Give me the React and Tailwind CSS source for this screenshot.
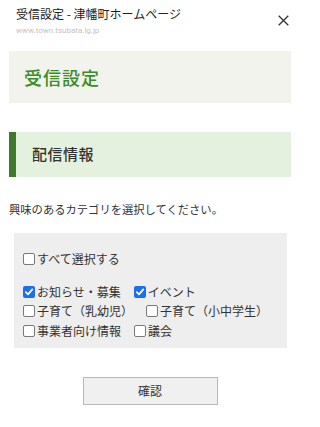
import React from 'react';

const Check = ({ checked }) =>
    checked ? (
        <span className="w-[12px] h-[12px] rounded-[2px] bg-[#1a6ef0] flex items-center justify-center shrink-0">
            <svg width="10" height="10" viewBox="0 0 10 10">
                <path d="M1.8 5.2 L4 7.4 L8.3 2.4" fill="none" stroke="#fff" strokeWidth="1.8" strokeLinecap="round" strokeLinejoin="round" />
            </svg>
        </span>
    ) : (
        <span className="w-[12px] h-[12px] rounded-[2px] border border-[#7a7a7a] bg-white shrink-0"></span>
    );

const Item = ({ label, checked }) => (
    <label className="flex items-center mr-[13px] h-[19.5px]">
        <Check checked={checked} />
        <span className="ml-[2px]">{label}</span>
    </label>
);

const App = () => {
    return (
        <div className="w-[300px] h-[427px] bg-white text-[#333] overflow-hidden" style={{ fontFamily: '"Noto Sans CJK JP", "Noto Sans", sans-serif' }}>
            {/* Header */}
            <div className="flex justify-between px-4 pt-[5px]">
                <div>
                    <div className="text-[12px] leading-[18px] text-[#222]">受信設定 - 津幡町ホームページ</div>
                    <div className="mt-[3px] text-[8px] leading-[10px] text-[#c4c4c4]" style={{ fontFamily: 'Roboto, "Liberation Sans", sans-serif' }}>
                        www.town.tsubata.lg.jp
                    </div>
                </div>
                <svg width="11" height="11" viewBox="0 0 11 11" className="mt-[10px] mr-[-5px]">
                    <path d="M0.7 0.7 L10.3 10.3 M10.3 0.7 L0.7 10.3" stroke="#333" strokeWidth="1.3" />
                </svg>
            </div>

            {/* Page title */}
            <div className="mx-[9px] mt-[15px] h-[52px] bg-[#f1f3ec] flex items-center px-[15px]">
                <h1 className="text-[18px] font-medium text-[#3c8c28] tracking-[1px]">受信設定</h1>
            </div>

            {/* Section heading */}
            <div className="mx-[9px] mt-[29px] h-[45px] bg-[#e4f1de] border-l-[7px] border-[#3d7a2c] flex items-center pl-[16px]">
                <h2 className="text-[15px] font-medium text-[#333] tracking-[0.5px]">配信情報</h2>
            </div>

            <p className="ml-[9px] mt-[24px] text-[11.3px] leading-[16px] text-[#333]">興味のあるカテゴリを選択してください。</p>

            {/* Category box */}
            <div className="ml-[14px] mr-[13px] mt-[16px] h-[115px] bg-[#eeeeee] pl-[9px] pt-[16px] text-[12px] text-[#333]">
                <div className="flex h-[20px]">
                    <Item label="すべて選択する" />
                </div>
                <div className="flex flex-wrap mt-[13px]">
                    <Item label="お知らせ・募集" checked />
                    <Item label="イベント" checked />
                    <Item label="子育て（乳幼児）" />
                    <Item label="子育て（小中学生）" />
                    <Item label="事業者向け情報" />
                    <Item label="議会" />
                </div>
            </div>

            <button className="block mx-auto mt-[29px] w-[135px] h-[28px] bg-[#f0f0f0] border border-[#b8b8b8] text-[12px] text-[#333]">
                確認
            </button>
        </div>
    );
};

export default App;
